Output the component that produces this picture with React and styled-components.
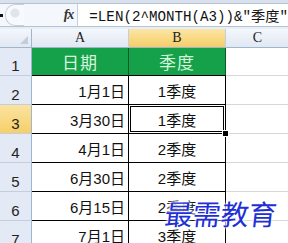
import React from 'react'
import styled, { createGlobalStyle, css } from 'styled-components'

const GlobalStyle = createGlobalStyle`
  html, body {
    margin: 0;
    padding: 0;
    background: #ffffff;
    overflow: hidden;
  }
`

const Frame = styled.div`
  position: relative;
  width: 288px;
  height: 243px;
  overflow: hidden;
  background: #ffffff;
`

const FormulaBar = styled.div`
  height: 29px;
  box-sizing: border-box;
  padding-top: 3px;
  padding-bottom: 2px;
  background: linear-gradient(#d9e2ec 0, #d9e2ec 3px, #e8eef5 3px);
  display: flex;
`

const NameArea = styled.div`
  width: 80px;
  box-sizing: border-box;
  border-top: 1px solid #b5c3d4;
  border-bottom: 1px solid #b5c3d4;
  border-right: 1px solid #c3cfdd;
  background: #f4f7fb;
  display: flex;
  align-items: center;
  position: relative;
`

const Dot = styled.span`
  width: 3px;
  height: 3px;
  background: #111;
`

const Knob = styled.span`
  width: 18px;
  height: 20px;
  margin-left: 2px;
  border-radius: 10px 0 0 10px;
  border: 1px solid #c7d2df;
  border-right: none;
  background: radial-gradient(circle at 9px 8px, #dfe5ec 0 4px, #f7f9fc 5px);
`

const Fx = styled.span`
  margin-left: auto;
  margin-right: 4px;
  font-family: 'Liberation Serif', serif;
  font-style: italic;
  font-weight: bold;
  font-size: 14px;
  color: #333;
  letter-spacing: -1px;
`

const FormulaInput = styled.div`
  flex: 1;
  box-sizing: border-box;
  border-top: 1px solid #b5c3d4;
  border-bottom: 1px solid #b5c3d4;
  background: #ffffff;
  padding-left: 11px;
  display: flex;
  align-items: center;
  font-family: 'Liberation Mono', 'Noto Sans CJK SC', monospace;
  font-size: 14.2px;
  color: #111;
  white-space: nowrap;
`

const Sheet = styled.div`
  display: grid;
  grid-template-columns: 32px 97px 97px 64px;
  grid-template-rows: 19px 28px repeat(6, 29px);
`

const headBg = css`
  background: ${(p) =>
    p.$active
      ? 'linear-gradient(#fbe6a6, #f5cd66)'
      : 'linear-gradient(#f4f7fb, #e1e8f2)'};
`

const Corner = styled.div`
  ${headBg};
  border-right: 1px solid #9eb6ce;
  border-bottom: 1px solid #9eb6ce;
  position: relative;
  &::after {
    content: '';
    position: absolute;
    right: 3px;
    bottom: 3px;
    border-left: 8px solid transparent;
    border-bottom: 8px solid #c3ccd8;
  }
`

const ColHead = styled.div`
  ${headBg};
  border-right: 1px solid #c2cfde;
  border-bottom: 1px solid #9eb6ce;
  display: flex;
  align-items: flex-end;
  justify-content: center;
  padding-bottom: 1px;
  box-sizing: border-box;
  font-family: 'Liberation Serif', serif;
  font-size: 14px;
  color: #222;
`

const RowHead = styled.div`
  background: ${(p) =>
    p.$active ? 'linear-gradient(#fbe3a0, #f6cf68)' : '#e3eaf5'};
  border-right: 1px solid #9eb6ce;
  border-bottom: 1px solid #c2cfde;
  display: flex;
  align-items: flex-end;
  justify-content: center;
  padding-bottom: 1px;
  box-sizing: border-box;
  font-family: 'Liberation Sans', sans-serif;
  font-size: 15px;
  color: #222;
`

const Title = styled.div`
  background: #15a04a;
  border-right: 1px solid #0c5a2a;
  border-bottom: 1px solid #000;
  display: flex;
  align-items: center;
  justify-content: center;
  font-family: 'Noto Sans CJK SC', sans-serif;
  font-size: 17px;
  color: #d6f6dc;
  letter-spacing: 1px;
`

const Cell = styled.div`
  position: relative;
  border-right: 1px solid #000;
  border-bottom: 1px solid #000;
  display: flex;
  align-items: center;
  justify-content: ${(p) => (p.$right ? 'flex-end' : 'center')};
  padding-right: ${(p) => (p.$right ? '3px' : '0')};
  padding-top: 1px;
  box-sizing: border-box;
  font-family: 'Liberation Sans', 'Noto Sans CJK SC', sans-serif;
  font-size: 15px;
  color: #111;
  ${(p) =>
    p.$selected &&
    css`
      &::after {
        content: '';
        position: absolute;
        inset: 1px;
        border: 1px solid #000;
      }
      &::before {
        content: '';
        position: absolute;
        right: -3px;
        bottom: -3px;
        width: 5px;
        height: 5px;
        background: #000;
        outline: 1px solid #fff;
        z-index: 2;
      }
    `}
`

const Blank = styled.div`
  border-right: 1px solid #d4d9e0;
  border-bottom: 1px solid #d4d9e0;
`

const Watermark = styled.div`
  position: absolute;
  left: 165px;
  top: 193px;
  font-family: 'Noto Sans CJK SC', sans-serif;
  font-size: 28px;
  font-weight: 400;
  color: #1e30d6;
  transform: skewX(-6deg);
  text-shadow: 0 0 2px #fff, 0 0 3px #fff, 0 0 4px #fff;
  z-index: 3;
`

const rows = [
  ['1月1日', '1季度'],
  ['3月30日', '1季度'],
  ['4月1日', '2季度'],
  ['6月30日', '2季度'],
  ['6月15日', '2季度'],
  ['7月1日', '3季度'],
]

const App = () => {
  return (
    <Frame>
      <GlobalStyle />
      <FormulaBar>
        <NameArea>
          <Dot />
          <Knob />
          <Fx>fx</Fx>
        </NameArea>
        <FormulaInput>=LEN(2^MONTH(A3))&amp;"季度"</FormulaInput>
      </FormulaBar>
      <Sheet>
        <Corner />
        <ColHead>A</ColHead>
        <ColHead $active>B</ColHead>
        <ColHead>C</ColHead>

        <RowHead>1</RowHead>
        <Title>日期</Title>
        <Title>季度</Title>
        <Blank />

        {rows.map(([date, quarter], i) => (
          <React.Fragment key={i}>
            <RowHead $active={i === 1}>{i + 2}</RowHead>
            <Cell $right>{date}</Cell>
            <Cell $selected={i === 1}>{quarter}</Cell>
            <Blank />
          </React.Fragment>
        ))}
      </Sheet>
      <Watermark>最需教育</Watermark>
    </Frame>
  )
}

export default App
